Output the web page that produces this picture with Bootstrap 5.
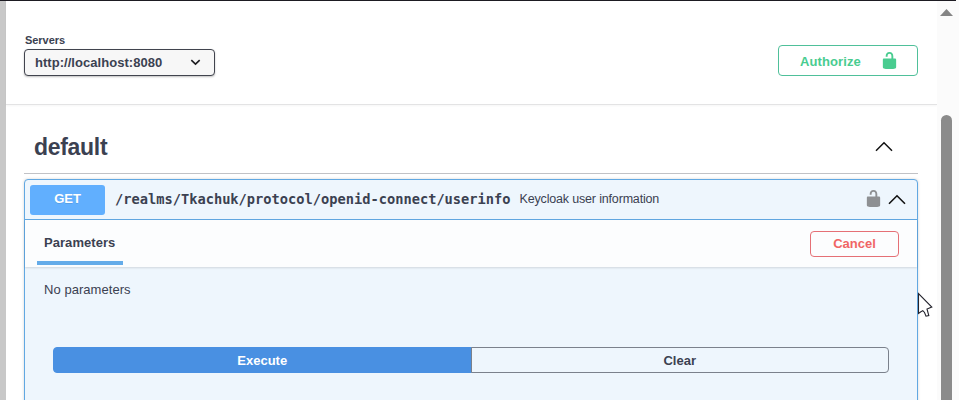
<!DOCTYPE html>
<html lang="en">
<head>
<meta charset="utf-8">
<meta name="viewport" content="width=device-width, initial-scale=1">
<title>API documentation</title>
<link href="https://cdn.jsdelivr.net/npm/bootstrap@5.3.0/dist/css/bootstrap.min.css" rel="stylesheet">
<style>
  body { font-family: "Liberation Sans", Arial, sans-serif; color: #3b4151; font-size: 13px; line-height: 16px; height: 400px; }
  .gutter { width: 6px; background: #c8c8c8; }
  .main-pane { width: 931px; background: #fff; }
  .top-line { height: 1px; width: 956px; background: #1d1b22; z-index: 2; }
  .btn { --bs-btn-font-size: 13px; --bs-btn-font-weight: 700; --bs-btn-padding-y: 0; --bs-btn-border-radius: 4px; --bs-btn-line-height: 16px; }

  .scheme { height: 105px; padding: 34px 19px 0 18px; border-bottom: 1px solid #e3e3e4; box-shadow: 0 1px 2px rgba(0,0,0,.04); }
  .servers-label { font-size: 11px; line-height: 12px; padding-left: 1px; letter-spacing: -.05px; margin-bottom: 3px; }
  .server-select { width: 191px; height: 27px; border: 1px solid #41444e; border-radius: 4px; background: #f7f7f7; padding: 0 13px 0 10px; box-shadow: 0 1px 2px rgba(0,0,0,.25); letter-spacing: .04px; }
  .btn-authorize { width: 140px; height: 31px; margin-top: 11px; padding: 2px 18px 0 21px; color: #49cc90; border-color: #4fc09a; letter-spacing: .1px; }
  .btn-authorize svg { margin-bottom: 2px; }

  .tag-head { height: 69px; margin: 0 19px 0 18px; padding: 15px 25px 0 10px; border-bottom: 1px solid #c1c2c6; }
  .tag-head h2 { font-size: 23px; line-height: 28px; margin: 13px 0 0; font-weight: 700; letter-spacing: -.3px; }
  .tag-chevron { margin-top: 21px; }

  .op-block { height: 240px; margin: 5px 19px 0 18px; border: 1px solid #61a8e2; border-radius: 4px; background: #eef6fd; box-shadow: 0 0 3px rgba(0,0,0,.17); }
  .op-summary { height: 40px; padding: 0 11px 0 5px; border-bottom: 1px solid #61a8e2; }
  .method { width: 75px; height: 30px; border-radius: 3px; background: #61affe; font-size: 13px; line-height: 27px; text-shadow: 0 1px 0 rgba(0,0,0,.1); }
  .op-path { font: 700 13.7px/20px "DejaVu Sans Mono", monospace; margin: 0 0 2px 10px; }
  .op-note { margin: 0 0 2px 9px; font-size: 12.5px; letter-spacing: -.17px; }
  .lock-small { margin-bottom: 2px; margin-right: 1px; }
  .op-tabs { height: 47px; padding: 0 18px 0 12px; background: #fcfdfe; box-shadow: 0 1px 2px rgba(0,0,0,.13); }
  .op-tab { width: 86px; height: 45px; padding: 15px 0 0 7px; border-bottom: 4px solid #65ace9; letter-spacing: .05px; }
  .btn-cancel { width: 89px; height: 26px; color: #f06565; border-color: #e57076; margin-top: 1px; }
  .op-body { padding: 15px 28px 0; }
  .op-empty { margin: 0 0 49px -9px; letter-spacing: .05px; }
  .op-actions .btn { height: 26px; width: 418px; padding-top: 1px; }
  .btn-execute { background: #4990e2; border-color: #4990e2; color: #fff; }
  .btn-clear { border-color: #7b818c; color: #3b4151; }

  .scroll-track { width: 22px; background: #fbfbfb; padding: 9px 0 0 3px; }
  .scroll-thumb { width: 11px; height: 285px; margin: 99px 0 0 1px; background: #8b8b8b; border-radius: 6px 6px 0 0; }
  .pointer { left: 917px; top: 292px; }
</style>
<script src="https://cdn.jsdelivr.net/npm/bootstrap@5.3.0/dist/js/bootstrap.bundle.min.js"></script>
</head>
<body class="d-flex overflow-hidden position-relative">
<svg class="d-none">
  <symbol id="unlocked" viewBox="0 0 20 20"><path d="M15.8 8H14V5.6C14 2.703 12.665 1 10 1 7.334 1 6 2.703 6 5.6V6h2v-.801C8 3.754 8.797 3 10 3c1.203 0 2 .754 2 2.199V8H4c-.553 0-1 .646-1 1.199V17c0 .549.428 1.139.951 1.307l1.197.387C5.672 18.861 6.55 19 7.1 19h5.8c.549 0 1.428-.139 1.951-.307l1.196-.387c.524-.167.953-.757.953-1.306V9.199C17 8.646 16.352 8 15.8 8z"/></symbol>
</svg>
<div class="top-line position-absolute top-0 start-0"></div>
<div class="gutter flex-shrink-0"></div>
<main class="main-pane flex-shrink-0">
  <header class="scheme d-flex justify-content-between align-items-start">
    <div>
      <div class="servers-label fw-bold">Servers</div>
      <div class="server-select d-flex align-items-center justify-content-between fw-bold">
        <span>http://localhost:8080</span>
        <svg width="11" height="7" viewBox="0 0 11 7" fill="none" stroke="#1c1c20" stroke-width="1.6"><path d="M1.3 1.2 5.5 5.2 9.7 1.2"/></svg>
      </div>
    </div>
    <button class="btn btn-authorize d-flex align-items-center justify-content-between"><span>Authorize</span><svg width="19" height="19" fill="#49cc90"><use href="#unlocked"/></svg></button>
  </header>

  <section>
    <div class="tag-head d-flex justify-content-between align-items-start">
      <h2>default</h2>
      <svg class="tag-chevron" width="18" height="11" viewBox="0 0 18 11" fill="none" stroke="#111" stroke-width="1.5"><path d="M1 9.7 9 1.8 17 9.7"/></svg>
    </div>

    <div class="op-block">
      <div class="op-summary d-flex align-items-center">
        <span class="method text-white text-center fw-bold">GET</span>
        <span class="op-path">/realms/Tkachuk/protocol/openid-connect/userinfo</span>
        <span class="op-note">Keycloak user information</span>
        <svg class="lock-small ms-auto" width="19" height="19" fill="#8e9093"><use href="#unlocked"/></svg>
        <svg class="ms-1" width="18" height="11" viewBox="0 0 18 11" fill="none" stroke="#111" stroke-width="1.6"><path d="M1 9.7 9 1.8 17 9.7"/></svg>
      </div>
      <div class="op-tabs d-flex align-items-center justify-content-between">
        <div class="op-tab fw-bold align-self-start">Parameters</div>
        <button class="btn btn-cancel">Cancel</button>
      </div>
      <div class="op-body">
        <p class="op-empty">No parameters</p>
        <div class="op-actions btn-group d-flex">
          <button class="btn btn-execute">Execute</button>
          <button class="btn btn-clear">Clear</button>
        </div>
      </div>
    </div>
  </section>
</main>
<aside class="scroll-track flex-shrink-0">
  <svg class="d-block" width="13" height="7" viewBox="0 0 13 7"><path d="M0 7 6.5 0 13 7Z" fill="#858585"/></svg>
  <div class="scroll-thumb"></div>
</aside>
<svg class="pointer position-absolute" width="17" height="26" viewBox="0 0 17 26"><path d="M1.5 1.5V21.5L3.5 20 5.8 18.6 7.5 20.5 9 24.2 11.8 23.6 10 17 14.8 15Z" fill="#fff" stroke="#22222c" stroke-width="1.1"/></svg>
</body>
</html>
